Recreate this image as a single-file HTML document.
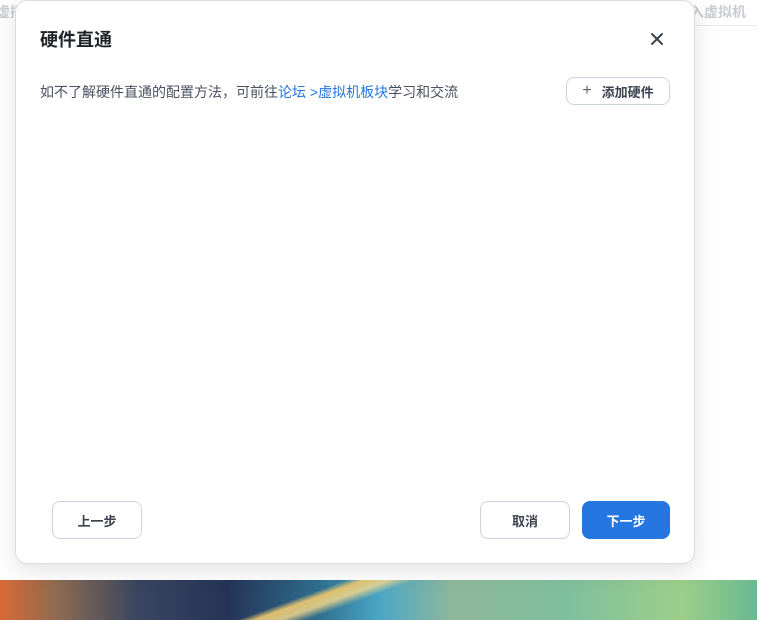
<!DOCTYPE html>
<html><head><meta charset="utf-8"><style>
*{box-sizing:border-box;margin:0;padding:0}
body{width:757px;height:620px;overflow:hidden;background:#fff;font-family:"Liberation Sans","Noto Sans CJK SC",sans-serif;position:relative}
.topline{position:absolute;left:690px;right:0;top:25px;height:1px;background:#e8eaee}
.bgt{position:absolute;top:2px;font-size:14px;font-weight:bold;color:#c9ccd2;white-space:nowrap}
.wall{position:absolute;left:0;right:0;top:580px;height:40px;
background:
linear-gradient(160deg,transparent 0 40%,rgba(240,200,110,.9) 42%,rgba(250,220,140,.8) 45%,transparent 48%),
linear-gradient(90deg,#d86a35 0%,#8a6a52 8%,#3a4660 18%,#253456 30%,#2f6e8e 42%,#4aa6c6 50%,#8fb89a 60%,#7ebf9e 75%,#9dcf8a 90%,#6ab890 100%)}
.dlg{position:absolute;left:15px;top:0px;width:680px;height:564px;background:#fff;border-radius:12px;border:1px solid #d9dde3;box-shadow:0 6px 24px rgba(0,0,0,.12)}
.title{position:absolute;left:24px;top:25px;font-size:18px;font-weight:bold;color:#1f2329}
.close{position:absolute;left:634px;top:31px;width:14px;height:14px}
.desc{position:absolute;left:24px;top:81px;font-size:14px;color:#4a5260;white-space:nowrap}
.desc a{color:#2576e0;text-decoration:none}
.btn{position:absolute;border:1px solid #c9d3df;border-radius:8px;background:#fff;font-size:13px;font-weight:bold;color:#3c4452;display:flex;align-items:center;justify-content:center}
</style></head><body>
<div class="bgt" style="left:-4px">虚拟</div>
<div class="bgt" style="left:690px">入虚拟机</div>
<div class="topline"></div>
<div class="wall"></div>
<div class="dlg">
<div class="title">硬件直通</div>
<svg class="close" viewBox="0 0 14 14"><path d="M2 2L12 12M12 2L2 12" stroke="#3c4452" stroke-width="2" stroke-linecap="round"/></svg>
<div class="desc">如不了解硬件直通的配置方法，可前往<a>论坛 &gt;虚拟机板块</a>学习和交流</div>
<div class="btn" style="left:550px;top:76px;width:104px;height:28px"><span style="font-weight:normal;font-size:16px;margin-right:10px;color:#5a6272">+</span>添加硬件</div>
<div class="btn" style="left:36px;top:500px;width:90px;height:38px">上一步</div>
<div class="btn" style="left:464px;top:500px;width:90px;height:38px">取消</div>
<div class="btn" style="left:566px;top:500px;width:88px;height:38px;background:#2576e0;border-color:#2576e0;color:#fff">下一步</div>
</div>
</body></html>
